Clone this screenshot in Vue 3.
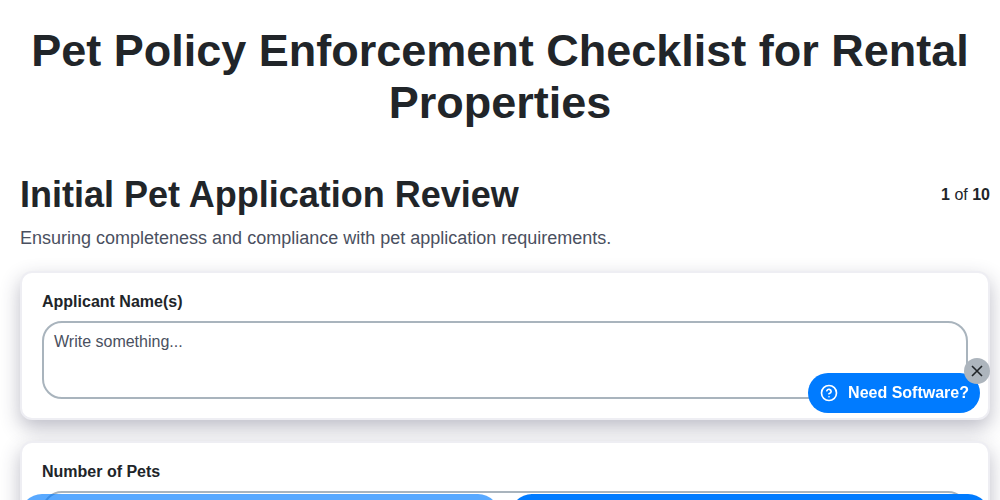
<template>
  <div class="page">
    <h1 class="title">Pet Policy Enforcement Checklist for Rental Properties</h1>

    <div class="content">
      <div class="section-head">
        <h2>Initial Pet Application Review</h2>
        <div class="counter"><b>1</b> of <b>10</b></div>
      </div>
      <p class="section-desc">Ensuring completeness and compliance with pet application requirements.</p>

      <div class="card" v-for="field in fields" :key="field">
        <label class="field-label">{{ field }}</label>
        <textarea class="field-input" placeholder="Write something..."></textarea>
      </div>
    </div>
  </div>

  <div class="nav-buttons">
    <div class="nav-btn prev"></div>
    <div class="nav-btn next"></div>
  </div>

  <div class="promo">
    <button class="promo-pill">
      <svg width="18" height="18" viewBox="0 0 24 24" fill="none" stroke="#fff" stroke-width="2.2" stroke-linecap="round" stroke-linejoin="round">
        <circle cx="12" cy="12" r="10" />
        <path d="M9.1 9a3 3 0 0 1 5.8 1c0 2-3 3-3 3" />
        <path d="M12 17h.01" />
      </svg>
      Need Software?
    </button>
    <button class="promo-close">
      <svg width="12" height="12" viewBox="0 0 12 12" fill="none" stroke="#212529" stroke-width="1.6">
        <path d="M1 1l10 10M11 1L1 11" />
      </svg>
    </button>
  </div>
</template>

<script setup>
const fields = ['Applicant Name(s)', 'Number of Pets']
</script>

<style>
body { background: #fff; }
</style>

<style scoped>
.page {
  padding: 25px 10px 0;
  font-family: "Liberation Sans", Arial, sans-serif;
  color: #212529;
}
.title {
  margin: 0 0 44px;
  font-size: 45px;
  line-height: 52px;
  font-weight: 700;
  text-align: center;
}
.content {
  padding-left: 10px;
}
.section-head {
  display: flex;
  justify-content: space-between;
  align-items: flex-start;
}
.section-head h2 {
  margin: 0;
  font-size: 36px;
  line-height: 44px;
  font-weight: 700;
}
.counter {
  font-size: 16px;
  line-height: 44px;
}
.section-desc {
  margin: 9px 0 21px;
  font-size: 18px;
  line-height: 24px;
  color: #4a5060;
}
.card {
  margin: 0 0 21px;
  padding: 20px;
  height: 149px;
  box-sizing: border-box;
  background: #fff;
  border: 2px solid #eeeef3;
  border-radius: 12px;
  box-shadow: 0 8px 20px rgba(50, 50, 80, 0.32);
}
.field-label {
  display: block;
  margin-bottom: 10px;
  font-size: 16px;
  line-height: 18px;
  font-weight: 700;
}
.field-input {
  display: block;
  width: 100%;
  height: 78px;
  box-sizing: border-box;
  padding: 10px;
  border: 2px solid #a9b4bd;
  border-radius: 20px;
  background: #fff;
  outline: none;
  resize: none;
  font-family: inherit;
  font-size: 16px;
  line-height: 18px;
}
.field-input::placeholder {
  color: #4a5060;
  opacity: 1;
}
.nav-buttons {
  position: fixed;
  left: 20px;
  right: 10px;
  bottom: -40px;
  display: flex;
  gap: 10px;
}
.nav-btn {
  flex: 1;
  height: 46px;
  border-radius: 22px;
  background: #007bff;
}
.nav-btn.prev { opacity: 0.65; }
.promo {
  position: fixed;
  right: 20px;
  bottom: 87px;
}
.promo-pill {
  display: flex;
  align-items: center;
  gap: 10px;
  height: 40px;
  padding: 0 11px 0 12px;
  border: none;
  border-radius: 20px;
  background: #007bff;
  color: #fff;
  font-family: "Liberation Sans", Arial, sans-serif;
  font-size: 16px;
  font-weight: 700;
}
.promo-close {
  position: absolute;
  top: -15px;
  right: -10px;
  width: 26px;
  height: 26px;
  display: flex;
  align-items: center;
  justify-content: center;
  padding: 0;
  border: none;
  border-radius: 50%;
  background: #adb5bd;
}
</style>
